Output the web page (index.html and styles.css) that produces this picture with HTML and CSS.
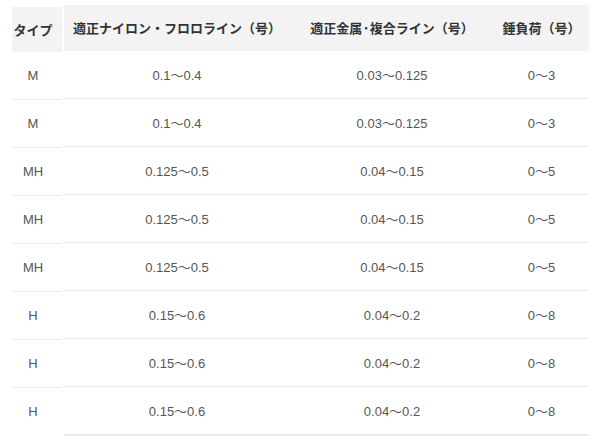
FILE: index.html
```html
<!DOCTYPE html>
<html lang="ja">
<head>
<meta charset="utf-8">
<link rel="stylesheet" href="styles.css">
</head>
<body>
<div class="wrap">
  <div class="types">
    <div class="th">タイプ</div>
    <div class="td">M</div>
    <div class="td">M</div>
    <div class="td">MH</div>
    <div class="td">MH</div>
    <div class="td">MH</div>
    <div class="td">H</div>
    <div class="td">H</div>
    <div class="td last">H</div>
  </div>
  <table class="spec">
    <thead>
      <tr><th class="c1">適正ナイロン・フロロライン（号）</th><th class="c2">適正金属·複合ライン（号）</th><th class="c3">錘負荷（号）</th></tr>
    </thead>
    <tbody>
      <tr><td>0.1～0.4</td><td>0.03～0.125</td><td>0～3</td></tr>
      <tr><td>0.1～0.4</td><td>0.03～0.125</td><td>0～3</td></tr>
      <tr><td>0.125～0.5</td><td>0.04～0.15</td><td>0～5</td></tr>
      <tr><td>0.125～0.5</td><td>0.04～0.15</td><td>0～5</td></tr>
      <tr><td>0.125～0.5</td><td>0.04～0.15</td><td>0～5</td></tr>
      <tr><td>0.15～0.6</td><td>0.04～0.2</td><td>0～8</td></tr>
      <tr><td>0.15～0.6</td><td>0.04～0.2</td><td>0～8</td></tr>
      <tr class="end"><td>0.15～0.6</td><td>0.04～0.2</td><td>0～8</td></tr>
    </tbody>
  </table>
</div>
</body>
</html>
```
FILE: styles.css
```css
html, body {
  margin: 0;
  padding: 0;
  background: #fff;
}
body {
  font-family: "Liberation Sans", "Noto Sans CJK JP", sans-serif;
  font-size: 13px;
  color: #555;
}
.wrap {
  display: flex;
  align-items: flex-start;
  gap: 2px;
  padding: 5px 0 0 12px;
}
.types {
  width: 50px;
  margin-top: 2px;
  display: flex;
  flex-direction: column;
}
.types .th {
  height: 45px;
  padding-right: 8px;
  background: #f3f3f3;
  display: flex;
  align-items: center;
  justify-content: center;
  font-family: "Noto Sans CJK JP", sans-serif;
  font-weight: bold;
  color: #333;
}
.types .td {
  height: 47px;
  padding-right: 8px;
  border-bottom: 1px solid #ececec;
  display: flex;
  align-items: center;
  justify-content: center;
}
.types .td.last {
  border-bottom: none;
}
.spec {
  width: 525px;
  border-collapse: collapse;
  table-layout: fixed;
}
.spec th {
  height: 44px;
  padding: 0 0 2px;
  background: #f3f3f3;
  font-family: "Noto Sans CJK JP", sans-serif;
  font-weight: bold;
  color: #333;
  text-align: center;
  white-space: nowrap;
}
.spec .c1 { width: 226px; }
.spec .c2 { width: 204px; }
.spec .c3 { width: 95px; }
.spec td {
  height: 47px;
  padding: 0;
  text-align: center;
  border-bottom: 1px solid #ececec;
}
.spec tr.end td {
  border-bottom: 2px solid #ebebeb;
}
```
